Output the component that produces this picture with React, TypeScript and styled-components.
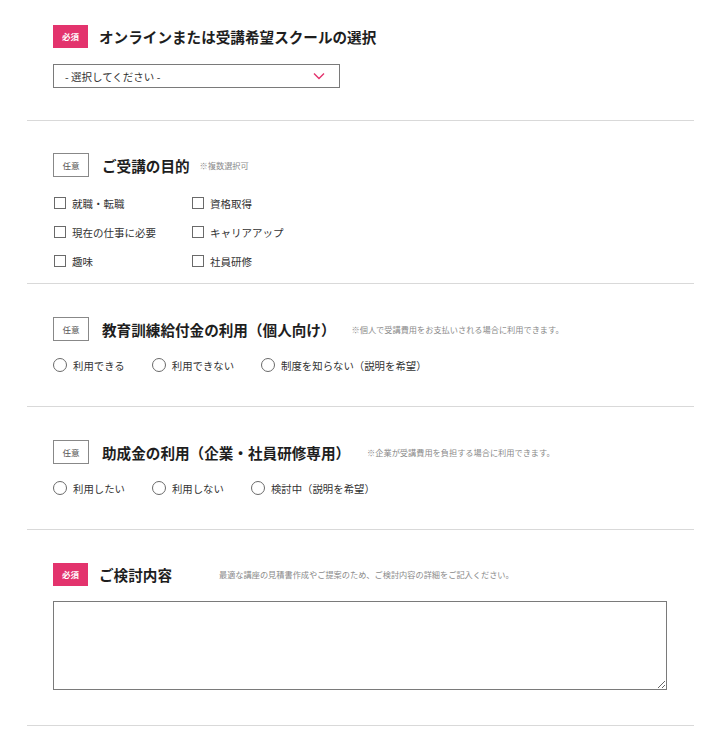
import * as React from "react";
import styled, { createGlobalStyle } from "styled-components";

const PINK = "#e3336d";

const GlobalStyle = createGlobalStyle`
  html, body {
    margin: 0;
    padding: 0;
    background: #fff;
  }
  body {
    font-family: "Noto Sans CJK JP", "Noto Sans", sans-serif;
    color: #222;
  }
`;

interface Option {
  label: string;
}

const purposes: Option[][] = [
  [{ label: "就職・転職" }, { label: "資格取得" }],
  [{ label: "現在の仕事に必要" }, { label: "キャリアアップ" }],
  [{ label: "趣味" }, { label: "社員研修" }],
];

const App: React.FC = () => {
  return (
    <>
      <GlobalStyle />
      <Form>
        <Section top={24} bottom={32}>
          <Header>
            <Badge required>必須</Badge>
            <Title>オンラインまたは受講希望スクールの選択</Title>
          </Header>
          <Body gap={16}>
            <Select>
              <span>- 選択してください -</span>
              <Chevron />
            </Select>
          </Body>
        </Section>

        <Section top={32} bottom={13}>
          <Header>
            <Badge>任意</Badge>
            <Title>ご受講の目的</Title>
            <Note gap={10}>※複数選択可</Note>
          </Header>
          <Body gap={17}>
            <CheckGrid>
              {purposes.flat().map((p) => (
                <CheckLabel key={p.label}>
                  <CheckBox />
                  {p.label}
                </CheckLabel>
              ))}
            </CheckGrid>
          </Body>
        </Section>

        <Section top={33} bottom={32}>
          <Header>
            <Badge>任意</Badge>
            <Title>教育訓練給付金の利用（個人向け）</Title>
            <Note gap={16}>※個人で受講費用をお支払いされる場合に利用できます。</Note>
          </Header>
          <Body gap={15}>
            <RadioRow>
              <RadioLabel><Radio />利用できる</RadioLabel>
              <RadioLabel><Radio />利用できない</RadioLabel>
              <RadioLabel><Radio />制度を知らない（説明を希望）</RadioLabel>
            </RadioRow>
          </Body>
        </Section>

        <Section top={33} bottom={32}>
          <Header>
            <Badge>任意</Badge>
            <Title>助成金の利用（企業・社員研修専用）</Title>
            <Note gap={17}>※企業が受講費用を負担する場合に利用できます。</Note>
          </Header>
          <Body gap={15}>
            <RadioRow>
              <RadioLabel><Radio />利用したい</RadioLabel>
              <RadioLabel><Radio />利用しない</RadioLabel>
              <RadioLabel><Radio />検討中（説明を希望）</RadioLabel>
            </RadioRow>
          </Body>
        </Section>

        <Section top={32} bottom={35}>
          <Header>
            <Badge required>必須</Badge>
            <Title>ご検討内容</Title>
            <Note gap={47}>最適な講座の見積書作成やご提案のため、ご検討内容の詳細をご記入ください。</Note>
          </Header>
          <Body gap={15}>
            <TextArea />
          </Body>
        </Section>
      </Form>
    </>
  );
};

export default App;

const Chevron: React.FC = () => (
  <svg width="12" height="8" viewBox="0 0 12 8">
    <path d="M1 1.5 L6 6.5 L11 1.5" fill="none" stroke={PINK} strokeWidth="1.4" />
  </svg>
);

const Form = styled.div`
  width: 667px;
  margin-left: 27px;
`;

interface SectionProps {
  top: number;
  bottom: number;
}

const Section = styled.section<SectionProps>`
  padding: ${(p) => p.top}px 0 ${(p) => p.bottom}px 26px;
  border-bottom: 1px solid #d9d9d9;
`;

const Header = styled.div`
  display: flex;
  align-items: center;
  height: 24px;
`;

interface BadgeProps {
  required?: boolean;
}

const Badge = styled.span<BadgeProps>`
  display: inline-flex;
  align-items: center;
  justify-content: center;
  box-sizing: border-box;
  width: 36px;
  height: 24px;
  margin-right: 13px;
  font-size: 8.5px;
  color: #555;
  border: 1px solid #888;
  background: #fff;
  ${(p) =>
    p.required &&
    `
    width: 35px;
    height: 23px;
    margin-right: 11px;
    color: #fff;
    font-weight: bold;
    background: ${PINK};
    border-color: ${PINK};
  `}
`;

const Title = styled.h2`
  margin: 0;
  font-size: 14.6px;
  font-weight: bold;
  color: #1e1e1e;
  white-space: nowrap;
`;

const Note = styled.span<{ gap: number }>`
  margin-left: ${(p) => p.gap}px;
  font-size: 8.2px;
  color: #8a8a8a;
  white-space: nowrap;
`;

const Body = styled.div<{ gap: number }>`
  margin-top: ${(p) => p.gap}px;
`;

const Select = styled.div`
  box-sizing: border-box;
  display: flex;
  align-items: center;
  justify-content: space-between;
  width: 287px;
  height: 24px;
  padding: 0 14px 0 11px;
  border: 1px solid #7a7a7a;
  font-size: 10.5px;
  color: #333;
`;

const CheckGrid = styled.div`
  display: grid;
  grid-template-columns: 138px auto;
  row-gap: 11px;
`;

const CheckLabel = styled.label`
  display: flex;
  align-items: center;
  height: 18px;
  font-size: 10.5px;
  color: #333;
  white-space: nowrap;
`;

const CheckBox = styled.span`
  box-sizing: border-box;
  display: inline-block;
  width: 12px;
  height: 12px;
  margin: 0 6px 0 1px;
  border: 1px solid #6a6a6a;
  background: #fff;
`;

const RadioRow = styled.div`
  display: flex;
  gap: 27px;
`;

const RadioLabel = styled.label`
  display: flex;
  align-items: center;
  height: 18px;
  font-size: 10.4px;
  color: #333;
  white-space: nowrap;
`;

const Radio = styled.span`
  box-sizing: border-box;
  display: inline-block;
  width: 14px;
  height: 14px;
  margin-right: 6px;
  border: 1px solid #6a6a6a;
  border-radius: 50%;
  background: #fff;
`;

const TextArea = styled.textarea`
  display: block;
  box-sizing: border-box;
  width: 614px;
  height: 89px;
  margin: 0;
  border: 1px solid #7a7a7a;
  border-radius: 0;
  font-family: inherit;
  font-size: 12px;
  resize: both;
`;
